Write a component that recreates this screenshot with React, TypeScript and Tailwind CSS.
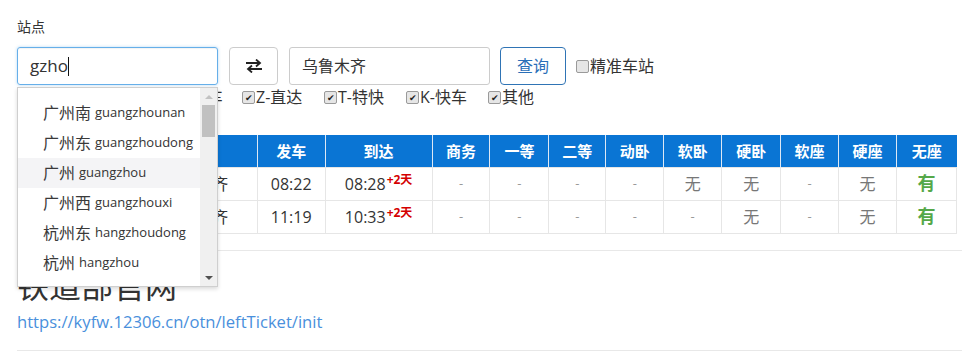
import React from "react";

const font = { fontFamily: '"Open Sans", "Noto Sans CJK SC", sans-serif' };

const trains = [
  { no: "T197", from: "广州", to: "乌鲁木齐", dep: "08:22", arr: "08:28", seats: ["-", "-", "-", "-", "无", "无", "-", "无", "有"] },
  { no: "Z137", from: "广州", to: "乌鲁木齐", dep: "11:19", arr: "10:33", seats: ["-", "-", "-", "-", "-", "无", "-", "无", "有"] },
];

const seatCols = ["商务", "一等", "二等", "动卧", "软卧", "硬卧", "软座", "硬座", "无座"];
const seatWidths = ["w-[58px]", "w-[59px]", "w-[57px]", "w-[58px]", "w-[58px]", "w-[59px]", "w-[58px]", "w-[58px]", "w-[60px]"];

const suggestions = [
  { cn: "广州南", py: "guangzhounan" },
  { cn: "广州东", py: "guangzhoudong" },
  { cn: "广州", py: "guangzhou", active: true },
  { cn: "广州西", py: "guangzhouxi" },
  { cn: "杭州东", py: "hangzhoudong" },
  { cn: "杭州", py: "hangzhou" },
];

const filters = ["GC-高铁", "D-动车", "Z-直达", "T-特快", "K-快车", "其他"];

const Check = ({ checked }: { checked: boolean }) => (
  <span className="inline-flex items-center justify-center w-[13px] h-[13px] mr-[1px] rounded-[2px] border border-[#9a9a9a] bg-[#e6e6e6] text-[9px] leading-none text-[#222] shrink-0">
    {checked ? "✔" : ""}
  </span>
);

const SwapIcon = () => (
  <svg width="18" height="14" viewBox="0 0 18 14" fill="none" stroke="#222" strokeWidth="2">
    <path d="M1 4h14" />
    <path d="M11 0.5l4 3.5-4 3.5" strokeWidth="1.8" />
    <path d="M17 10H3" />
    <path d="M7 6.5l-4 3.5 4 3.5" strokeWidth="1.8" />
  </svg>
);

const Dropdown = () => (
  <div className="absolute left-[17px] top-[87px] w-[201px] h-[200px] bg-white border border-[#cfcfcf] shadow-[0_2px_4px_rgba(0,0,0,0.15)] flex overflow-hidden">
    <div className="flex-1 pt-[10px]">
      {suggestions.map((s) => (
        <div key={s.cn} className={`h-[30px] flex items-center pl-[25px] whitespace-nowrap ${s.active ? "bg-[#f4f4f6]" : ""}`}>
          <span className="text-[16px] text-[#3a3a3a]">{s.cn}</span>
          <span className="ml-[4px] text-[13px] text-[#333]">{s.py}</span>
        </div>
      ))}
    </div>
    <div className="w-[17px] bg-[#f0f0f0] flex flex-col items-center">
      <div className="h-[17px] flex items-center justify-center">
        <span className="w-0 h-0 border-l-[4px] border-r-[4px] border-b-[4px] border-l-transparent border-r-transparent border-b-[#c2c2c2]" />
      </div>
      <div className="w-[13px] h-[32px] bg-[#c1c1c1]" />
      <div className="flex-1" />
      <div className="h-[17px] flex items-center justify-center">
        <span className="w-0 h-0 border-l-[4px] border-r-[4px] border-t-[4px] border-l-transparent border-r-transparent border-t-[#505050]" />
      </div>
    </div>
  </div>
);

export default function App() {
  return (
    <div className="relative bg-white w-[979px] h-[355px] overflow-hidden px-[17px] pt-[17px] text-[14px] text-[#333]" style={font}>
      <div className="h-[20px] leading-[20px] text-[14px]">站点</div>
      <div className="mt-[10px] flex items-center h-[38px]">
        <div className="w-[201px] h-[38px] border border-[#66afe9] rounded-[3px] flex items-center px-[12px] text-[17px] shadow-[inset_0_1px_1px_rgba(0,0,0,0.05),0_0_3px_rgba(102,175,233,0.5)]">
          gzho<span className="w-px h-[19px] bg-[#111]" />
        </div>
        <div className="ml-[11px] w-[49px] h-[38px] border border-[#ccc] rounded-[4px] flex items-center justify-center">
          <SwapIcon />
        </div>
        <div className="ml-[11px] w-[201px] h-[38px] border border-[#ccc] rounded-[3px] flex items-center px-[12px] text-[16px]">
          乌鲁木齐
        </div>
        <div className="ml-[10px] w-[66px] h-[38px] border border-[#2f74b5] rounded-[4px] flex items-center justify-center text-[16px] text-[#2a6fb8]">
          查询
        </div>
        <label className="ml-[10px] flex items-center text-[16px]">
          <Check checked={false} />精准车站
        </label>
      </div>
      <div className="mt-[2px] flex items-center h-[20px] leading-[20px] text-[16px] pl-[61px]">
        {filters.map((f) => (
          <label key={f} className="flex items-center w-[82px] shrink-0 whitespace-nowrap">
            <Check checked />
            {f}
          </label>
        ))}
      </div>
      <table className="mt-[28px] border-collapse text-center w-[940px]">
        <thead>
          <tr className="bg-[#0a75d4] text-white text-[15px] font-bold h-[32px]">
            <th className="w-[52px] border-r border-[#dde8f5]">车次</th>
            <th className="w-[66px] border-r border-[#dde8f5]">出发</th>
            <th className="w-[122px] border-r border-[#dde8f5]">到站</th>
            <th className="w-[68px] border-r border-[#dde8f5]">发车</th>
            <th className="w-[107px] border-r border-[#dde8f5]">到达</th>
            {seatCols.map((c, i) => (
              <th key={c} className={`${seatWidths[i]} ${i < 8 ? "border-r border-[#dde8f5]" : ""}`}>{c}</th>
            ))}
          </tr>
        </thead>
        <tbody>
          {trains.map((t) => (
            <tr key={t.no} className="h-[33px] text-[16px]">
              <td className="border border-[#e6e6e6]">{t.no}</td>
              <td className="border border-[#e6e6e6]">{t.from}</td>
              <td className="border border-[#e6e6e6]">{t.to}</td>
              <td className="border border-[#e6e6e6]">{t.dep}</td>
              <td className="border border-[#e6e6e6]">
                {t.arr}
                <sup className="text-[12px] font-bold text-[#d40000] ml-[1px]">+2天</sup>
              </td>
              {t.seats.map((s, i) => (
                <td
                  key={i}
                  className={`border border-[#e6e6e6] ${s === "有" ? "text-[18px] font-semibold text-[#55a849]" : s === "无" ? "text-[#777]" : "text-[#999] text-[13px]"}`}
                >
                  {s}
                </td>
              ))}
            </tr>
          ))}
        </tbody>
      </table>
      <div className="mt-[16px] border-t border-[#e8e8e8]" />
      <div className="mt-[17px] text-[32px] leading-[36px] text-[#333]">铁道部官网</div>
      <div className="mt-[7px] text-[16.6px] leading-[22px] text-[#4a90dc]">https://kyfw.12306.cn/otn/leftTicket/init</div>
      <div className="mt-[17px] border-t border-[#e8e8e8]" />
      <Dropdown />
    </div>
  );
}
